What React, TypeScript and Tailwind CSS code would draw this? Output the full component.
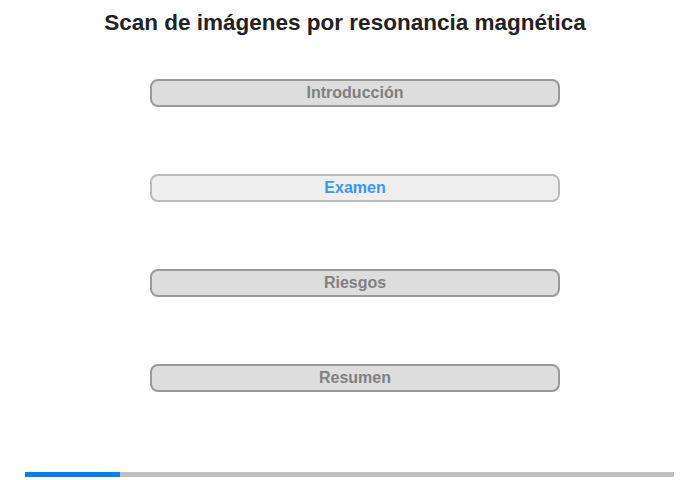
import React from 'react';

const sections = [
  { label: 'Introducción', active: false },
  { label: 'Examen', active: true },
  { label: 'Riesgos', active: false },
  { label: 'Resumen', active: false },
];

export default function App() {
  return (
    <div className="w-[700px] h-[480px] bg-white font-['Liberation_Sans',Arial,sans-serif] relative">
      <h1 className="pt-[10px] w-[690px] text-center text-[22.5px] leading-[26px] font-bold text-[#222222]">
        Scan de imágenes por resonancia magnética
      </h1>

      <div className="flex flex-col gap-[67px] pl-[150px] pt-[43px]">
        {sections.map((s) => (
          <button
            key={s.label}
            className={
              'w-[410px] h-[28px] rounded-[8px] border-2 text-[16px] font-bold leading-none ' +
              (s.active
                ? 'bg-[#eeeeee] border-[#bbbbbb] text-[#3399ff]'
                : 'bg-[#dddddd] border-[#999999] text-[#808080]')
            }
          >
            {s.label}
          </button>
        ))}
      </div>

      <div className="absolute left-[25px] top-[472px] w-[649px] h-[5px] bg-[#c0c0c0] flex">
        <div className="w-[95px] h-full bg-[#007fff]" />
      </div>
    </div>
  );
}
